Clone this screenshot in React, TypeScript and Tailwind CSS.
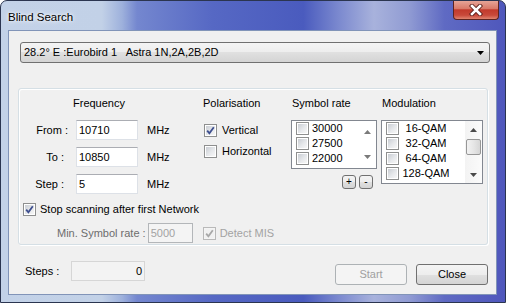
import React from "react";

function Check({ checked = false, disabled = false }: { checked?: boolean; disabled?: boolean }) {
  return (
    <span
      className={`relative inline-block w-[13px] h-[13px] shrink-0 border ${
        disabled ? "border-[#b9b9b9] bg-[#f4f4f4]" : "border-[#8e8f8f] bg-white"
      }`}
    >
      <span
        className={`absolute inset-[1px] ${
          disabled ? "bg-[#f1f1f1]" : "bg-[linear-gradient(135deg,#c9cdd3_0%,#e6e8eb_55%,#f7f7f7_100%)]"
        }`}
      />
      {checked && (
        <svg width="11" height="11" viewBox="0 0 11 11" className="absolute left-0 top-0">
          <path
            d="M2.2 5.6 L4.4 8.3 L8.8 2.2"
            fill="none"
            stroke={disabled ? "#a8a8a8" : "#3e4f8f"}
            strokeWidth="1.8"
          />
        </svg>
      )}
    </span>
  );
}

function Arrow({ up = false, color = "#4a4a4a" }: { up?: boolean; color?: string }) {
  return (
    <svg width="7" height="4" viewBox="0 0 7 4">
      <path d={up ? "M0 4 L3.5 0 L7 4 Z" : "M0 0 L7 0 L3.5 4 Z"} fill={color} />
    </svg>
  );
}

const winButton =
  "border border-[#707070] rounded-[3px] bg-[linear-gradient(180deg,#f4f4f4_0%,#ededed_50%,#e0e0e0_50%,#d4d4d4_100%)]";

const textBox = "bg-white border border-[#dde1e7] border-t-[#abadb3] h-[20px] flex items-center pl-[2px]";

export default function App() {
  const symbolRates = ["30000", "27500", "22000"];
  const modulations = ["16-QAM", "32-QAM", "64-QAM", "128-QAM"];

  return (
    <div className="w-[506px] h-[303px] overflow-hidden rounded-t-[7px] border border-[#2b3550] text-[11px] text-black font-['Liberation_Sans',Arial,sans-serif] bg-[linear-gradient(90deg,#c3d2e8_0%,#c2d1e7_20%,#9eb1dc_24%,#7487cf_27%,#5668c4_42%,#4a5bbe_60%,#7b89cf_67%,#a8b2dc_74%,#909bd3_81%,#5f6ac3_88%,#4f57bc_100%)]">
      {/* title bar */}
      <div className="h-[29px] flex items-start justify-between">
        <div className="pl-[7px] pt-[8px] text-[11.5px] [text-shadow:0_0_6px_#ffffff,0_0_3px_#ffffff]">Blind Search</div>
        <div className="-mt-px mr-[6px] w-[46px] h-[20px] rounded-b-[4px] border border-t-0 border-[#5c2420] bg-[linear-gradient(180deg,#e8aa9d_0%,#d97a69_45%,#c23a2c_52%,#c8493a_80%,#e08470_100%)] flex items-center justify-center">
          <svg width="14" height="12" viewBox="0 0 14 12">
            <path d="M3 2 L11 10 M11 2 L3 10" stroke="#5a1f1a" strokeWidth="4.4" strokeLinecap="square" />
            <path d="M3 2 L11 10 M11 2 L3 10" stroke="#ffffff" strokeWidth="2.6" strokeLinecap="square" />
          </svg>
        </div>
      </div>

      <div className="flex">
        <div className="w-[7px] shrink-0" />
        {/* client area */}
        <div className="w-[489px] h-[265px] shrink-0 bg-[#f0f0f0] border border-[#8194b8] flex flex-col">
          {/* satellite combo */}
          <div className={`mt-[11px] ml-[11px] w-[470px] h-[21px] flex items-center justify-between pl-[3px] pr-[5px] ${winButton}`}>
            <span className="whitespace-pre">28.2° E :Eurobird 1   Astra 1N,2A,2B,2D</span>
            <Arrow color="#000000" />
          </div>

          {/* group box */}
          <div className="mt-[25px] ml-[9px] w-[470px] h-[157px] border border-[#d5dfe5] rounded-[3px] shadow-[inset_1px_1px_0_#ffffff,1px_1px_0_#ffffff] pt-[7px] flex flex-col">
            <div className="flex items-start">
              {/* frequency */}
              <div className="w-[184px] flex flex-col">
                <div className="h-[15px] leading-[15px] pl-[54px]">Frequency</div>
                <div className="mt-[9px] flex flex-col gap-[7px]">
                  {[
                    ["From :", "10710", ""],
                    ["To :", "10850", "pr-[4px]"],
                    ["Step :", "5", "pr-[4px]"],
                  ].map(([label, value, pad]) => (
                    <div key={label} className="flex items-center h-[20px]">
                      <span className={`w-[49px] text-right ${pad}`}>{label}</span>
                      <div className={`ml-[8px] w-[62px] ${textBox}`}>{value}</div>
                      <span className="ml-[9px]">MHz</span>
                    </div>
                  ))}
                </div>
              </div>

              {/* polarisation */}
              <div className="w-[88px] flex flex-col">
                <div className="h-[15px] leading-[15px]">Polarisation</div>
                <div className="mt-[9px] flex flex-col gap-[1px] pl-[1px]">
                  <div className="h-[20px] flex items-center gap-[5px]">
                    <Check checked />
                    <span>Vertical</span>
                  </div>
                  <div className="h-[20px] flex items-center gap-[5px]">
                    <Check />
                    <span>Horizontal</span>
                  </div>
                </div>
              </div>

              {/* symbol rate */}
              <div className="w-[90px] flex flex-col">
                <div className="h-[15px] leading-[15px] pl-[1px]">Symbol rate</div>
                <div className="mt-[9px] w-[86px] h-[49px] bg-white border border-[#828790] flex">
                  <div className="flex-1 flex flex-col pl-[4px]">
                    {symbolRates.map((s) => (
                      <div key={s} className="h-[15px] flex items-center gap-[3px]">
                        <Check />
                        <span>{s}</span>
                      </div>
                    ))}
                  </div>
                  <div className="w-[17px] flex flex-col items-center justify-between py-[9px]">
                    <Arrow up color="#7a7a7a" />
                    <Arrow color="#7a7a7a" />
                  </div>
                </div>
                <div className="mt-[6px] w-[86px] flex justify-end gap-[3px] pr-[4px]">
                  <div className={`w-[14px] h-[14px] flex items-center justify-center text-[10px] leading-none ${winButton}`}>+</div>
                  <div className={`w-[14px] h-[14px] flex items-center justify-center text-[10px] leading-none ${winButton}`}>-</div>
                </div>
              </div>

              {/* modulation */}
              <div className="flex flex-col">
                <div className="h-[15px] leading-[15px] pl-[1px]">Modulation</div>
                <div className="mt-[9px] w-[102px] h-[64px] bg-white border border-[#828790] flex">
                  <div className="flex-1 flex flex-col pl-[4px]">
                    {modulations.map((m) => (
                      <div key={m} className="h-[15px] flex items-center">
                        <Check />
                        <span className="ml-[1px] w-[52px] text-center">{m}</span>
                      </div>
                    ))}
                  </div>
                  <div className="w-[17px] flex flex-col items-center bg-[linear-gradient(90deg,#f3f3f3,#fbfbfb)]">
                    <div className="h-[18px] flex items-center justify-center">
                      <Arrow up />
                    </div>
                    <div className="w-[15px] h-[16px] rounded-[2px] border border-[#979797] bg-[linear-gradient(90deg,#f2f2f2_0%,#e6e6e6_50%,#d6d6d6_100%)]" />
                    <div className="flex-1" />
                    <div className="h-[17px] flex items-center justify-center">
                      <Arrow />
                    </div>
                  </div>
                </div>
              </div>
            </div>

            {/* stop scanning */}
            <div className="mt-[5px] h-[20px] pl-[4px] flex items-center gap-[4px]">
              <Check checked />
              <span>Stop scanning after first Network</span>
            </div>

            <div className="mt-[4px] h-[20px] pl-[38px] flex items-center">
              <span className="text-[#6d6d6d]">Min. Symbol rate :</span>
              <div className="ml-[2px] w-[45px] h-[20px] border border-[#b3b6b9] bg-[#f4f4f4] flex items-center pl-[2px] text-[#a3a3a3]">
                5000
              </div>
              <div className="ml-[10px] flex items-center gap-[4px]">
                <Check checked disabled />
                <span className="text-[#a3a3a3]">Detect MIS</span>
              </div>
            </div>
          </div>

          {/* bottom row */}
          <div className="mt-[16px] flex items-start">
            <div className="ml-[16px] h-[20px] flex items-center">
              <span className="w-[46px]">Steps :</span>
              <div className="w-[74px] h-[20px] border border-[#d6d6d6] bg-[#f3f3f3] flex items-center justify-end pr-[2px]">0</div>
            </div>
            <div className="ml-auto mr-[8px] mt-[3px] flex gap-[9px]">
              <div className="w-[72px] h-[21px] rounded-[3px] border border-[#adb2b5] bg-[#f4f4f4] text-[#a0a0a0] flex items-center justify-center">
                Start
              </div>
              <div className={`w-[72px] h-[21px] flex items-center justify-center ${winButton}`}>Close</div>
            </div>
          </div>
        </div>
      </div>
    </div>
  );
}
